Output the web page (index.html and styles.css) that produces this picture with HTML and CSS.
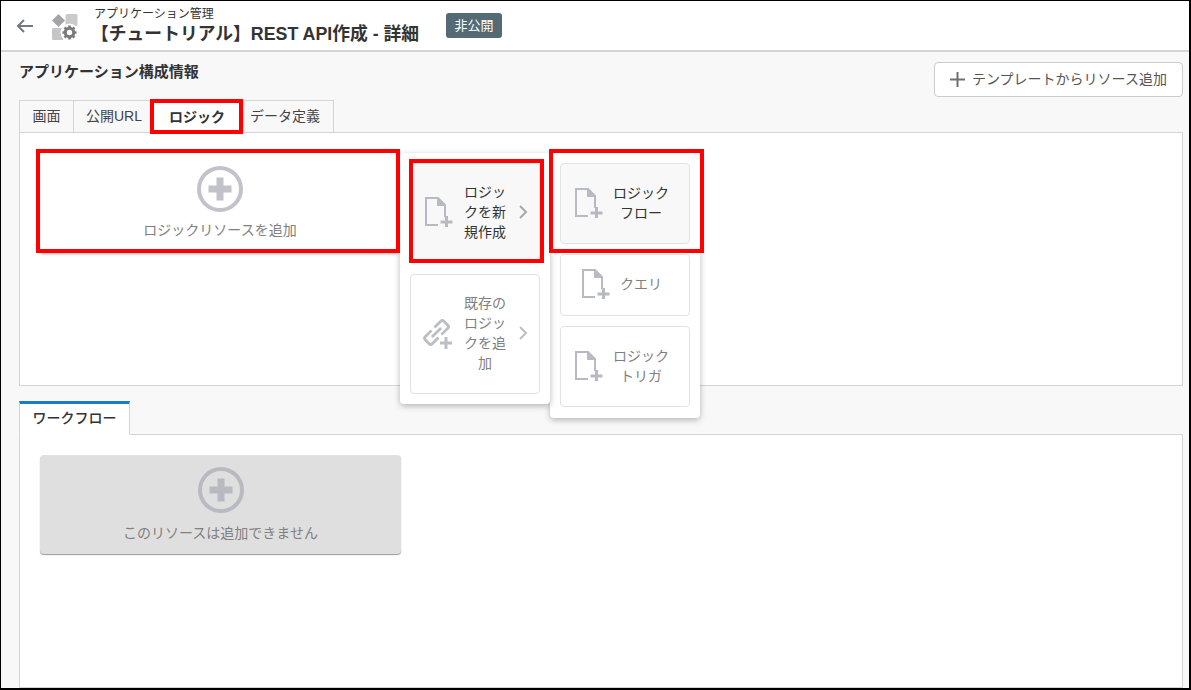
FILE: index.html
```html
<!DOCTYPE html>
<html lang="ja">
<head>
<meta charset="utf-8">
<title>アプリケーション構成情報</title>
<link rel="stylesheet" href="styles.css">
</head>
<body>
<div class="frame">
  <svg width="0" height="0" class="defs">
    <symbol id="file" viewBox="0 0 28 30">
      <path d="M1 1H13L20 8V28H1Z" fill="none" stroke="currentColor" stroke-width="2"/>
      <path d="M12 0L21 9H12Z" fill="currentColor"/>
      <path d="M13 20H28V30H13Z" fill="var(--cut, #fff)"/>
      <path d="M20 19H23V23.500H27.500V26.500H23V30H20V26.500H15.500V23.500H20Z" fill="currentColor"/>
    </symbol>
    <symbol id="plus-circle" viewBox="0 0 46 46">
      <circle cx="23" cy="23" r="21" fill="none" stroke="currentColor" stroke-width="4"/>
      <path d="M19.500 11.500H26.500V19.500H34.500V26.500H26.500V34.500H19.500V26.500H11.500V19.500H19.500Z" fill="currentColor"/>
    </symbol>
  </svg>

  <header class="topbar">
    <svg class="back" viewBox="0 0 18 14" width="18" height="14"><path d="M8 1L2 7L8 13M2 7H17" fill="none" stroke="#77777f" stroke-width="2"/></svg>
    <svg class="logo" viewBox="0 0 26 26" width="26" height="26">
      <path d="M6.500 0L13 6.500L6.500 13L0 6.500Z" fill="#a4a4a8"/>
      <rect x="13.500" y="0" width="12" height="12" rx="1.500" fill="#cacaca"/>
      <rect x="0" y="14" width="11.500" height="12" rx="1.500" fill="#c6c6c6"/>
      <circle cx="17.500" cy="18.500" r="9" fill="#fff"/>
      <circle cx="17.500" cy="18.500" r="4.200" fill="none" stroke="#7a7a7e" stroke-width="3"/>
      <path d="M17.500 11.500V25.500M10.500 18.500H24.500M12.500 13.500L22.500 23.500M22.500 13.500L12.500 23.500" stroke="#7a7a7e" stroke-width="2.600" stroke-dasharray="2.400 9.400"/>
    </svg>
    <div class="titles">
      <div class="crumb">アプリケーション管理</div>
      <h1 class="title">【チュートリアル】REST API作成 - 詳細</h1>
    </div>
    <span class="badge">非公開</span>
  </header>

  <main class="content">
    <div class="headrow">
      <h2 class="section-title">アプリケーション構成情報</h2>
      <button class="tpl-btn"><svg viewBox="0 0 15 15" width="15" height="15"><path d="M7.500 0V15M0 7.500H15" stroke="#707070" stroke-width="2"/></svg><span class="tpl-text">テンプレートからリソース追加</span></button>
    </div>

    <nav class="tabs">
      <span class="tab tab-first">画面</span>
      <span class="tab tab-url">公開URL</span>
      <span class="tab tab-active">ロジック</span>
      <span class="tab tab-data">データ定義</span>
    </nav>
    <section class="panel panel-logic">
      <div class="add-card">
        <svg class="plus-icon"><use href="#plus-circle"/></svg>
        <div class="add-label">ロジックリソースを追加</div>
      </div>
    </section>

    <nav class="tabs tabs-wf">
      <span class="wf-tab">ワークフロー</span>
    </nav>
    <section class="panel panel-wf">
      <div class="add-card card-disabled">
        <svg class="plus-icon"><use href="#plus-circle"/></svg>
        <div class="add-label">このリソースは追加できません</div>
      </div>
    </section>
  </main>

  <div class="menu menu-a">
    <div class="item item-on item-create">
      <svg class="ficon"><use href="#file"/></svg>
      <span class="label narrow">ロジッ<br>クを新<br>規作成</span>
      <svg class="chev" viewBox="0 0 9 14" width="9" height="14"><path d="M1 1L7 7L1 13" fill="none" stroke="#a9a9ad" stroke-width="2"/></svg>
    </div>
    <div class="item item-existing">
      <svg class="ficon" viewBox="0 0 31 32" width="31" height="32">
        <g transform="rotate(-45 14.500 14.500)" fill="none" stroke="#bdbdc5" stroke-width="2.800">
          <path d="M12.500 9.500H3.500Q1.300 9.500 1.300 11.700V17.300Q1.300 19.500 3.500 19.500H12.500"/>
          <path d="M16.500 9.500H25.500Q27.700 9.500 27.700 11.700V17.300Q27.700 19.500 25.500 19.500H16.500"/>
          <path d="M8 14.500H21"/>
        </g>
        <path d="M17 18.500H31V32H17Z" fill="#fff"/>
        <path d="M22.500 19H25.500V23.500H30V26.500H25.500V31H22.500V26.500H18V23.500H22.500Z" fill="#bdbdc5"/>
      </svg>
      <span class="label narrow dim">既存の<br>ロジッ<br>クを追<br>加</span>
      <svg class="chev" viewBox="0 0 9 14" width="9" height="14"><path d="M1 1L7 7L1 13" fill="none" stroke="#bdbdc5" stroke-width="2"/></svg>
    </div>
  </div>

  <div class="menu menu-b">
    <div class="item item-on item-flow">
      <svg class="ficon"><use href="#file"/></svg>
      <span class="label wide">ロジック<br>フロー</span>
    </div>
    <div class="item item-query">
      <svg class="ficon"><use href="#file"/></svg>
      <span class="label dim">クエリ</span>
    </div>
    <div class="item item-trigger">
      <svg class="ficon"><use href="#file"/></svg>
      <span class="label wide dim">ロジック<br>トリガ</span>
    </div>
  </div>

  <span class="mark mark-tab"></span>
  <span class="mark mark-add"></span>
  <span class="mark mark-create"></span>
  <span class="mark mark-flow"></span>
</div>
</body>
</html>
```
FILE: styles.css
```css
* { box-sizing: border-box; }
html, body { margin: 0; padding: 0; }
body {
  width: 1191px;
  height: 690px;
  overflow: hidden;
  font-family: "Liberation Sans", "Noto Sans CJK JP", sans-serif;
  color: #333;
  background: #fff;
}
.defs { position: absolute; }
.frame {
  position: relative;
  width: 1191px;
  height: 690px;
  border: solid #000;
  border-width: 1px 2px 2px 1px;
  background: #f8f8f8;
  display: flex;
  flex-direction: column;
  overflow: hidden;
}

/* Top bar */
.topbar {
  height: 51px;
  flex: none;
  display: flex;
  align-items: center;
  background: #fff;
  border-bottom: 2px solid #d4d4d4;
  padding-left: 15px;
}
.back { flex: none; margin-right: 18px; }
.logo { flex: none; margin-right: 17px; margin-top: 2px; }
.titles { width: 352px; align-self: flex-start; padding-top: 6px; }
.crumb { font-size: 12px; line-height: 14px; color: #333; margin-left: -1px; }
.title {
  margin: 1px 0 0 -4px;
  font-size: 17.800px;
  line-height: 24px;
  font-weight: 700;
  color: #333;
  white-space: nowrap;
}
.badge {
  margin: 0 0 0 -1px;
  width: 56px;
  height: 25px;
  border-radius: 3px;
  background: #546a75;
  color: #fff;
  font-size: 13px;
  line-height: 25px;
  text-align: center;
}

/* Content */
.content { flex: 1; padding: 0 6px 0 18px; display: flex; flex-direction: column; min-height: 0; }
.headrow { height: 48px; flex: none; display: flex; justify-content: space-between; position: relative; }
.section-title { margin: 9px 0 0; font-size: 15px; line-height: 21px; font-weight: 700; color: #333; }
.tpl-btn {
  margin-top: 10px;
  width: 249px;
  height: 35px;
  display: flex;
  align-items: center;
  gap: 7px;
  padding: 0 0 0 15px;
  border: 1px solid #ccc;
  border-radius: 4px;
  background: #fff;
  font: inherit;
  font-size: 14px;
  color: #555;
  white-space: nowrap;
}
.tpl-text { margin: 0 0 4px; }

.tabs { display: flex; height: 33px; flex: none; font-size: 14px; position: relative; z-index: 1; }
.tab {
  height: 33px;
  line-height: 30px;
  text-align: center;
  border: 1px solid #d4d4d4;
  border-left-width: 0;
  background: #f8f8f8;
  color: #444;
}
.tab-first { width: 55px; border-left-width: 1px; }
.tab-url { width: 77px; padding-left: 4px; }
.tab-active {
  width: 93px;
  background: #fff;
  border-bottom-color: #fff;
  font-weight: 700;
  color: #333;
  line-height: 33px;
}
.tab-data { width: 90px; padding-right: 7px; }

.panel { background: #fff; border: 1px solid #d4d4d4; margin-top: -1px; }
.panel-logic { height: 254px; padding: 19px 0 0 20px; }
.panel-wf { flex: 1; padding: 20px 0 0 20px; }

.tabs-wf { margin-top: 15px; height: 34px; }
.wf-tab {
  width: 111px;
  height: 34px;
  background: #fff;
  border: 1px solid #d4d4d4;
  border-top: 3px solid #1a7bc9;
  border-bottom-color: #fff;
  font-weight: 500;
  text-align: center;
  line-height: 29px;
  color: #333;
}

.add-card {
  width: 360px;
  height: 101px;
  background: #fff;
  border-radius: 4px;
  box-shadow: 0 1px 3px rgba(0,0,0,.3);
  display: flex;
  flex-direction: column;
  align-items: center;
  padding-top: 14px;
  color: #c2c2ca;
}
.card-disabled {
  width: 361px;
  height: 99px;
  background: #dfdfdf;
  padding-top: 12px;
  color: #b9b9c1;
  box-shadow: 0 1px 1px rgba(0,0,0,.4);
}
.plus-icon { width: 46px; height: 46px; flex: none; }
.add-label { margin-top: 8px; font-size: 14px; line-height: 20px; color: #808080; }
.card-disabled .add-label { margin-top: 10px; }

/* Pop-up menus */
.menu {
  position: absolute;
  top: 152px;
  width: 150px;
  background: #fff;
  border-radius: 4px;
  padding: 10px;
  box-shadow: 0 2px 6px rgba(0,0,0,.28);
  display: flex;
  flex-direction: column;
}
.menu-a { left: 399px; height: 251px; gap: 11px; z-index: 3; }
.menu-b { left: 549px; height: 265px; gap: 10px; z-index: 2; }
.item {
  width: 130px;
  display: flex;
  align-items: center;
  border: 1px solid #e2e2e2;
  border-radius: 4px;
  background: #fff;
  color: #b9b9c3;
  font-size: 14px;
  line-height: 20px;
}
.item-on { background: #f8f8f8; --cut: #f8f8f8; }
.item-create { height: 100px; padding-left: 14px; }
.item-existing { height: 120px; padding-left: 11px; }
.item-flow { height: 81px; padding-left: 14px; }
.item-query { height: 62px; padding-left: 21px; }
.item-trigger { height: 81px; padding-left: 14px; }
.ficon { width: 28px; height: 30px; flex: none; margin-top: -2px; }
.item-existing .ficon { width: 31px; height: 32px; margin-top: 0; }
.item-query .label { margin-left: 10px; }
.label { color: #333; text-align: center; margin-bottom: 2px; }
.narrow { width: 44px; margin-left: 10px; }
.wide { width: 60px; margin-left: 8px; }
.dim { color: #808080; }
.chev { margin-left: 12px; margin-top: -2px; flex: none; }

/* Red annotation boxes */
.mark { position: absolute; border: 4px solid #f00; z-index: 5; pointer-events: none; }
.mark-tab { left: 149px; top: 98px; width: 93px; height: 35px; }
.mark-add { left: 35px; top: 148px; width: 364px; height: 104px; }
.mark-create { left: 408px; top: 158px; width: 135px; height: 104px; }
.mark-flow { left: 548px; top: 148px; width: 155px; height: 104px; }
```
